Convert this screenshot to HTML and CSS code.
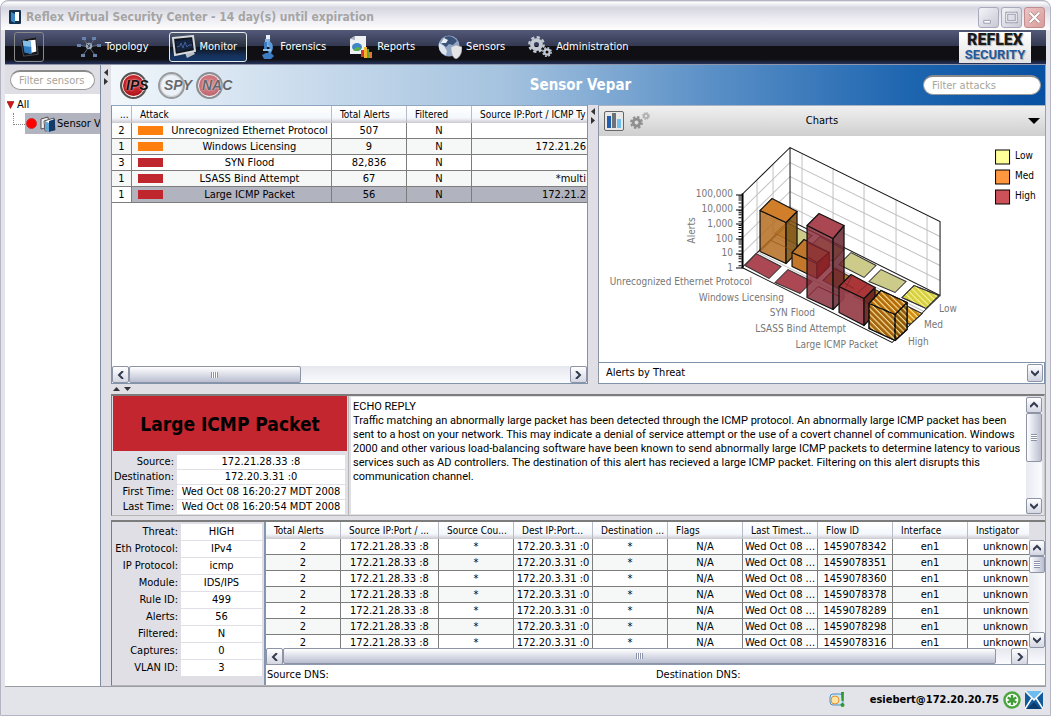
FILE: index.html
```html
<!DOCTYPE html>
<html lang="en">
<head>
<meta charset="utf-8">
<title>Reflex Virtual Security Center</title>
<link rel="stylesheet" href="styles.css">
</head>
<body>
<svg class="defs" width="0" height="0" aria-hidden="true">
  <defs>
    <symbol id="door" viewBox="0 0 24 24">
      <path d="M3 4 20 1 22 20 6 22Z" fill="#15171c" stroke="#4a4d55"/>
      <path d="M11 5 19 4 20 17 12 19Z" fill="#fff"/>
      <path d="M5 5 14 6 15 20 7 18Z" fill="#2f7cc0"/>
      <path d="M5 5 14 6 14 12 6 11Z" fill="#86bde6"/>
    </symbol>
    <symbol id="left" viewBox="0 0 8 8"><path d="M6 0 2 4 6 8" fill="none" stroke="#333b50" stroke-width="2"/></symbol>
    <symbol id="right" viewBox="0 0 8 8"><path d="M2 0 6 4 2 8" fill="none" stroke="#333b50" stroke-width="2"/></symbol>
    <symbol id="up" viewBox="0 0 8 8"><path d="M0 6 4 2 8 6" fill="none" stroke="#333b50" stroke-width="2"/></symbol>
    <symbol id="down" viewBox="0 0 8 8"><path d="M0 2 4 6 8 2" fill="none" stroke="#333b50" stroke-width="2"/></symbol>
    <symbol id="gear" viewBox="0 0 16 16">
      <circle cx="8" cy="8" r="6.8" fill="none" stroke="currentColor" stroke-width="2.2" stroke-dasharray="3 2.34"/>
      <circle cx="8" cy="8" r="4.2" fill="none" stroke="currentColor" stroke-width="3.6"/>
    </symbol>
  </defs>
</svg>
<div class="window">
  <header class="titlebar">
    <svg class="title-icon" viewBox="0 0 12 14"><rect width="12" height="14" rx="1" fill="#14304f"/><path d="M6 2h4v9H6z" fill="#fff"/><path d="M2 2l4 2v9l-4-2z" fill="#3b86c4"/></svg>
    <h1>Reflex Virtual Security Center - 14 day(s) until expiration</h1>
    <div class="win-buttons">
      <button class="win-btn" aria-label="Minimize"><svg viewBox="0 0 20 20"><path d="M5 13h7v3H5z" fill="#fff" stroke="#9a9aae"/></svg></button>
      <button class="win-btn" aria-label="Maximize"><svg viewBox="0 0 20 20"><path d="M5 5.500h10v9H5z" fill="none" stroke="#9a9aae" stroke-width="3"/><path d="M5 5.500h10v9H5z" fill="none" stroke="#fff"/></svg></button>
      <button class="win-btn close" aria-label="Close"><svg viewBox="0 0 20 20"><path d="M5 5l10 10M15 5 5 15" stroke="#b08080" stroke-width="4"/><path d="M5 5l10 10M15 5 5 15" stroke="#fff" stroke-width="2.400"/></svg></button>
    </div>
  </header>

  <nav class="nav">
    <button class="home" aria-label="Home"><svg viewBox="0 0 24 24"><use href="#door"/></svg></button>
    <button class="nav-item">
      <svg class="ico" viewBox="0 0 24 24"><path d="M12 12 6 3M12 12 18 3M12 12 2 10M12 12 22 10M12 12 6 20M12 12 18 20" stroke="#5f6b7c"/><g fill="#6883ad"><rect x="5" y="2" width="4" height="3"/><rect x="15" y="2" width="4" height="3"/><rect x="0" y="9" width="4" height="3"/><rect x="20" y="9" width="4" height="3"/><rect x="4" y="19" width="4" height="3"/><rect x="16" y="19" width="4" height="3"/></g><circle cx="12" cy="11" r="3.200" fill="#9aa7b8"/><path d="M10 9l3 3M13 9l-2 4" stroke="#3a485c"/></svg>
      Topology</button>
    <button class="nav-item active">
      <svg class="ico" viewBox="0 0 24 24"><path d="M13 18l8-2 2 3-8 4z" fill="#b9bec4"/><path d="M1 3 21 1 23 16 3 20Z" fill="#10151e" stroke="#d5d9dd" stroke-width="2"/><path d="M4 6 19 4 21 13 5 17Z" fill="#15243f"/><path d="M5 12l3-1 1-3 2 5 2-6 2 5 2-2 3 0" fill="none" stroke="#3f5f96"/></svg>
      Monitor</button>
    <button class="nav-item">
      <svg class="ico slim" viewBox="0 0 16 24"><path d="M6 0h4v4H6z" fill="#e8eef5"/><path d="M5 4h5v8H5z" fill="#7fb2e4"/><path d="M4 7h3v7H4z" fill="#3f79bd"/><path d="M9 6c5 2 5 9 1 13l-2-2c2-3 2-5 0-8z" fill="#5a9bdb"/><path d="M3 14h8v2H3z" fill="#8cc0ee"/><path d="M2 20l4-2h5l3 3-3 3H4z" fill="#3c7cc5"/></svg>
      Forensics</button>
    <button class="nav-item">
      <svg class="ico" viewBox="0 0 24 24"><path d="M1 4 6 1H17V19H1Z" fill="#eef0f2"/><path d="M1 4 6 1V5z" fill="#aab"/><ellipse cx="8" cy="12" rx="5" ry="4" fill="#3f86c8"/><path d="M8 12l-4 3c3 2 7 1 8-2z" fill="#57b148"/><path d="M12 15h3v7h-3z" fill="#d33b2b"/><path d="M15 12h3v11h-3z" fill="#f0b52c"/><path d="M18 14h2v9h-2z" fill="#6c9f3c"/><path d="M20 17h3v6h-3z" fill="#e27332"/></svg>
      Reports</button>
    <button class="nav-item">
      <svg class="ico" viewBox="0 0 24 24"><circle cx="11" cy="11" r="10.500" fill="#8fa5c6"/><path d="M7 2c4-2 9 0 12 4l-4 4-4-1-3 3-4-3z" fill="#3a5278"/><path d="M1 8l5 3 3 5-1 4C3 19 0 14 1 8z" fill="#dfe5ec"/><path d="M6 3l4 2-2 3-5 0z" fill="#e8edf3"/><path d="M13 12l5-2 6 2c0 6-2 10-6 12-4-2-5-6-5-12z" fill="#e3e4e6" stroke="#9a9ca0" stroke-width=".6"/></svg>
      Sensors</button>
    <button class="nav-item">
      <svg class="ico" viewBox="0 0 24 24" color="#c3c9d2"><use href="#gear" x="0" y="1" width="17" height="17"/><use href="#gear" x="14" y="12" width="10" height="10"/></svg>
      Administration</button>
    <div class="brand"><span class="brand-top">REFLEX</span><span class="brand-bottom">SECURITY</span></div>
  </nav>

  <div class="body">
    <aside class="side">
      <div class="side-filter"><input class="pill" type="text" placeholder="Filter sensors" aria-label="Filter sensors"></div>
      <ul class="tree">
        <li class="tree-root"><svg class="tri" viewBox="0 0 8 8"><path d="M0 0h8L4 8z" fill="#d81515" stroke="#7c0000" stroke-width=".6"/></svg>All</li>
        <li class="tree-child"><span class="elbow"></span><span class="tree-sel"><span class="dot"></span>
          <svg class="sensor-ico" viewBox="0 0 16 16"><path d="M1 3 8 1 9 11 1 13z" fill="#eee" stroke="#555"/><path d="M4 5 14 2 15 14 5 15z" fill="#fff" stroke="#555"/><path d="M9 5 15 3V14L9 16z" fill="#153a68"/><path d="M5 5l4 2v9l-4-2z" fill="#64a5da"/></svg>Sensor V</span></li>
      </ul>
    </aside>
    <div class="split-v"><svg class="arrows-v" viewBox="0 0 6 16"><path d="M5 0v7L1 3.500z"/><path d="M1 9v7l4-3.500z"/></svg></div>

    <main class="main">
      <div class="banner">
        <div class="modes">
          <button class="mode"><span class="orb red"></span><span class="mode-name">IPS</span></button>
          <button class="mode off"><span class="orb hollow"></span><span class="mode-name">SPY</span></button>
          <button class="mode off"><span class="orb red"></span><span class="mode-name">NAC</span></button>
        </div>
        <h2>Sensor Vepar</h2>
        <input class="pill" type="text" placeholder="Filter attacks" aria-label="Filter attacks">
      </div>

      <div class="upper">
        <section class="attacks">
          <table class="grid">
            <colgroup><col class="w-tiny"><col class="w-attack"><col class="w-75"><col class="w-65"><col></colgroup>
            <thead><tr><th>...</th><th>Attack</th><th>Total Alerts</th><th>Filtered</th><th>Source IP:Port / ICMP Ty</th></tr></thead>
            <tbody>
              <tr><td>2</td><td><div class="attack"><i class="sw med"></i><span>Unrecognized Ethernet Protocol</span></div></td><td>507</td><td>N</td><td></td></tr>
              <tr><td>1</td><td><div class="attack"><i class="sw med"></i><span>Windows Licensing</span></div></td><td>9</td><td>N</td><td class="end">172.21.26</td></tr>
              <tr><td>3</td><td><div class="attack"><i class="sw high"></i><span>SYN Flood</span></div></td><td>82,836</td><td>N</td><td></td></tr>
              <tr><td>1</td><td><div class="attack"><i class="sw high"></i><span>LSASS Bind Attempt</span></div></td><td>67</td><td>N</td><td class="end">*multi</td></tr>
              <tr class="selected"><td>1</td><td><div class="attack"><i class="sw high"></i><span>Large ICMP Packet</span></div></td><td>56</td><td>N</td><td class="end">172.21.2</td></tr>
            </tbody>
          </table>
          <div class="hscroll push">
            <button class="sbtn" aria-label="Scroll left"><svg><use href="#left"/></svg></button>
            <div class="track"><div class="thumb short"><i class="grip"></i></div></div>
            <button class="sbtn" aria-label="Scroll right"><svg><use href="#right"/></svg></button>
          </div>
        </section>
        <div class="split-v slim"><svg class="arrows-v" viewBox="0 0 6 16"><path d="M5 0v7L1 3.500z"/><path d="M1 9v7l4-3.500z"/></svg></div>
        <section class="charts">
          <div class="charts-head">
            <div class="tools">
              <button class="chart-btn" aria-label="Bar chart"><svg viewBox="0 0 16 16"><path d="M1 3h4v12H1z" fill="#1f5fae"/><path d="M6 0h4v15H6z" fill="#6d7278"/><path d="M11 6h4v9h-4z" fill="#6fc0ee"/></svg></button>
              <button class="gear-btn" aria-label="Chart settings"><svg viewBox="0 0 20 18" color="#8f8f8f"><use href="#gear" x="0" y="4" width="13" height="13"/><g color="#b0b0b0"><use href="#gear" x="12" y="0" width="8" height="8"/></g></svg></button>
            </div>
            <h3>Charts</h3>
            <button class="drop" aria-label="Chart menu"><svg viewBox="0 0 12 6"><path d="M0 0h12L6 6z"/></svg></button>
          </div>
          <svg class="chart" viewBox="599 136 446 225" role="img" aria-label="Alerts by threat">
            <defs>
              <pattern id="hatch" width="4" height="4" patternUnits="userSpaceOnUse" patternTransform="rotate(-45)"><path d="M1 0v4" stroke="#fff3b0" stroke-width="1"/></pattern>
            </defs>
            <g fill="none" stroke="#c2c2c2">
              <path d="M742 209 790 162 940 236M742 223 790 176 940 250M742 238 790 191 940 265M742 253 790 206 940 280"/>
              <path d="M757 180V252M773 164V236M802 153V226M833 168V241M864 184V257M896 199V272M927 215V288"/>
              <path d="M758 252 908 327M774 236 924 311"/>
            </g>
            <path d="M742 194 790 147 940 221V295L790 220V147M742 267 790 220M742 267 892 342 940 295" fill="none" stroke="#111"/>
            <g stroke="#333" stroke-width="1">
              <g fill="#cccb8a">
                <path d="M775 233 787 222 812 235 800 246z"/><path d="M808 248 820 236 844 249 833 261z"/>
                <path d="M839 264 851 252 876 265 864 277z"/><path d="M869 281 881 269 906 281 895 292z"/>
              </g>
              <path d="M902 297 914 285 939 295 926 308z" fill="#d4d13c"/><path d="M902 297 914 285 939 295 926 308z" fill="url(#hatch)"/>
              <g fill="#b87822"><path d="M823 280 835 268 859 281 848 293z"/><path d="M854 296 866 284 890 297 879 309z"/></g>
              <path d="M886 313 898 301 922 313 910 324z" fill="#d08c10"/><path d="M886 313 898 301 922 313 910 324z" fill="url(#hatch)"/>
              <g fill="#ab4853"><path d="M745 265 756 253 781 266 769 278z"/><path d="M775 282 788 269 812 281 800 293z"/></g>
            </g>
            <g stroke="#111" stroke-width="1.200" stroke-linejoin="round">
              <path d="M760 210 786 222V263L760 251z" fill="#b56c1e" fill-opacity=".85"/><path d="M786 222 797 211V252L786 263z" fill="#80500f" fill-opacity=".88"/><path d="M760 210 772 198 797 211 786 222z" fill="#d07e2a"/>
              <path d="M760 251 771 240 797 252" fill="none" stroke="#8a5315" stroke-width=".7"/><path d="M771 240 786 225" fill="none" stroke="#8a5315" stroke-width=".7"/>
              <path d="M792 252 817 263V278L792 266z" fill="#c4762a"/><path d="M817 263 829 252V266L817 278z" fill="#94591a"/><path d="M792 252 804 239 829 252 817 263z" fill="#bf762b"/>
              <path d="M807 225 833 238V309L807 297z" fill="#852b38" fill-opacity=".83"/><path d="M833 238 844 225V298L833 309z" fill="#6a2630" fill-opacity=".86"/><path d="M807 225 819 213 844 225 833 238z" fill="#aa4752"/>
              <path d="M807 256 817 262 829 252M817 263V277L829 266V252L807 242M823 280 835 268 844 273M807 297 818 286 844 298" fill="none" stroke="#6b1822" stroke-width=".8"/>
              <path d="M817 263 829 252V266L817 278z" fill="#8d1d21" stroke="none" fill-opacity=".65"/>
              <path d="M839 286 864 298V325L839 312z" fill="#97404a" fill-opacity=".94"/><path d="M864 298 875 287V313L864 325z" fill="#6d2420" fill-opacity=".94"/><path d="M839 286 851 274 875 287 864 298z" fill="#aa3638"/>
              <path d="M857 293 867 284M843 282 854 288M852 275 846 287" fill="none" stroke="#74202a" stroke-width=".7"/>
              <path d="M869 303 895 314V340L869 328z" fill="#a4630c"/><path d="M895 314 907 302V329L895 340z" fill="#8f5806"/><path d="M869 303 881 290 907 302 895 314z" fill="#b56a06"/>
              <path d="M869 303 881 290 907 302V329L895 340 869 328z" fill="url(#hatch)"/><path d="M869 303 895 314 907 302M895 314V340" fill="none"/>
            </g>
            <path d="M742.500 193V268" stroke="#000" stroke-width="2"/>
            <path d="M736 194.500h6M736 209.500h6M736 223.500h6M736 238.500h6M736 253.500h6M736 267.500h6" stroke="#000"/>
            <path d="M740 195V267" stroke="#000" stroke-width="3" stroke-dasharray="1 1 1 1 1 2 1 3 1 2.700"/>
            <g class="axis end-anchor">
              <text x="733" y="197">100,000</text><text x="733" y="212">10,000</text><text x="733" y="227">1,000</text><text x="733" y="242">100</text><text x="733" y="256">10</text><text x="733" y="271">1</text>
              <text x="752" y="285">Unrecognized Ethernet Protocol</text><text x="784" y="301">Windows Licensing</text><text x="815" y="316">SYN Flood</text><text x="846" y="332">LSASS Bind Attempt</text><text x="878" y="347">Large ICMP Packet</text>
            </g>
            <g class="axis"><text x="939" y="312">Low</text><text x="924" y="328">Med</text><text x="908" y="344">High</text><text transform="rotate(-90 695 243)" x="695" y="243">Alerts</text></g>
            <g stroke="#000"><path d="M995.500 149.500h14v14h-14z" fill="#ff9"/><path d="M995.500 169.500h14v14h-14z" fill="#ff9640"/><path d="M995.500 189.500h14v14h-14z" fill="#cc5158"/></g>
            <g class="legend"><text x="1015" y="159">Low</text><text x="1015" y="179">Med</text><text x="1015" y="199">High</text></g>
          </svg>
          <div class="pick"><select aria-label="Chart type"><option>Alerts by Threat</option></select><span class="pick-arrow"><svg><use href="#down"/></svg></span></div>
        </section>
      </div>

      <div class="split-h"><svg class="arrows-h" viewBox="0 0 20 6"><path d="M1 5h7L4.500 1z"/><path d="M12 1h7l-3.500 4z"/></svg></div>

      <section class="detail">
        <div class="summary">
          <div class="threat">Large ICMP Packet</div>
          <table class="props wide">
            <tr><th scope="row">Source:</th><td>172.21.28.33 :8</td></tr>
            <tr><th scope="row">Destination:</th><td>172.20.3.31 :0</td></tr>
            <tr><th scope="row">First Time:</th><td>Wed Oct 08 16:20:27 MDT 2008</td></tr>
            <tr><th scope="row">Last Time:</th><td>Wed Oct 08 16:20:54 MDT 2008</td></tr>
          </table>
        </div>
        <div class="note">
          <div class="note-text">ECHO REPLY<br>Traffic matching an abnormally large packet has been detected through the ICMP protocol. An abnormally large ICMP packet has been sent to a host on your network. This may indicate a denial of service attempt or the use of a covert channel of communication. Windows 2000 and other various load-balancing software have been known to send abnormally large ICMP packets to determine latency to various services such as AD controllers. The destination of this alert has recieved a large ICMP packet. Filtering on this alert disrupts this communication channel.</div>
          <div class="vscroll">
            <button class="sbtn" aria-label="Scroll up"><svg><use href="#up"/></svg></button>
            <div class="track"><div class="thumb tall"><i class="grip"></i></div></div>
            <button class="sbtn" aria-label="Scroll down"><svg><use href="#down"/></svg></button>
          </div>
        </div>
      </section>

      <section class="lower">
        <table class="props narrow">
          <tr><th scope="row">Threat:</th><td>HIGH</td></tr>
          <tr><th scope="row">Eth Protocol:</th><td>IPv4</td></tr>
          <tr><th scope="row">IP Protocol:</th><td>icmp</td></tr>
          <tr><th scope="row">Module:</th><td>IDS/IPS</td></tr>
          <tr><th scope="row">Rule ID:</th><td>499</td></tr>
          <tr><th scope="row">Alerts:</th><td>56</td></tr>
          <tr><th scope="row">Filtered:</th><td>N</td></tr>
          <tr><th scope="row">Captures:</th><td>0</td></tr>
          <tr><th scope="row">VLAN ID:</th><td>3</td></tr>
        </table>
        <div class="flows">
          <div class="flows-view">
            <div class="flows-clip">
              <table class="grid">
                <colgroup><col class="w-75"><col class="w-98"><col class="w-75"><col class="w-79"><col class="w-75"><col class="w-75"><col class="w-75"><col class="w-75"><col class="w-75"><col></colgroup>
                <thead><tr><th>Total Alerts</th><th>Source IP:Port / ...</th><th>Source Cou...</th><th>Dest IP:Port...</th><th>Destination ...</th><th>Flags</th><th>Last Timest...</th><th>Flow ID</th><th>Interface</th><th>Instigator</th></tr></thead>
                <tbody>
                  <tr><td>2</td><td>172.21.28.33 :8</td><td>*</td><td>172.20.3.31 :0</td><td>*</td><td>N/A</td><td>Wed Oct 08 ...</td><td>1459078342</td><td>en1</td><td class="end">unknown</td></tr>
                  <tr><td>2</td><td>172.21.28.33 :8</td><td>*</td><td>172.20.3.31 :0</td><td>*</td><td>N/A</td><td>Wed Oct 08 ...</td><td>1459078351</td><td>en1</td><td class="end">unknown</td></tr>
                  <tr><td>2</td><td>172.21.28.33 :8</td><td>*</td><td>172.20.3.31 :0</td><td>*</td><td>N/A</td><td>Wed Oct 08 ...</td><td>1459078360</td><td>en1</td><td class="end">unknown</td></tr>
                  <tr><td>2</td><td>172.21.28.33 :8</td><td>*</td><td>172.20.3.31 :0</td><td>*</td><td>N/A</td><td>Wed Oct 08 ...</td><td>1459078378</td><td>en1</td><td class="end">unknown</td></tr>
                  <tr><td>2</td><td>172.21.28.33 :8</td><td>*</td><td>172.20.3.31 :0</td><td>*</td><td>N/A</td><td>Wed Oct 08 ...</td><td>1459078289</td><td>en1</td><td class="end">unknown</td></tr>
                  <tr><td>2</td><td>172.21.28.33 :8</td><td>*</td><td>172.20.3.31 :0</td><td>*</td><td>N/A</td><td>Wed Oct 08 ...</td><td>1459078298</td><td>en1</td><td class="end">unknown</td></tr>
                  <tr><td>2</td><td>172.21.28.33 :8</td><td>*</td><td>172.20.3.31 :0</td><td>*</td><td>N/A</td><td>Wed Oct 08 ...</td><td>1459078316</td><td>en1</td><td class="end">unknown</td></tr>
                </tbody>
              </table>
            </div>
            <div class="vscroll under-head">
              <button class="sbtn" aria-label="Scroll up"><svg><use href="#up"/></svg></button>
              <div class="track"><div class="thumb stub"><i class="grip"></i></div></div>
              <button class="sbtn" aria-label="Scroll down"><svg><use href="#down"/></svg></button>
            </div>
          </div>
          <div class="hscroll inset">
            <button class="sbtn" aria-label="Scroll left"><svg><use href="#left"/></svg></button>
            <div class="track"><div class="thumb long"><i class="grip"></i></div></div>
            <button class="sbtn" aria-label="Scroll right"><svg><use href="#right"/></svg></button>
          </div>
          <div class="dns"><span>Source DNS:</span><span>Destination DNS:</span></div>
        </div>
      </section>
    </main>
  </div>

  <footer class="status">
    <svg class="st-ico alert" viewBox="0 0 18 18"><rect x="2" y="3" width="13" height="11" rx="3" fill="#cfe6f5" stroke="#4a8fc0"/><circle cx="7" cy="9" r="4" fill="#ffe3a0" stroke="#e0912a"/><path d="M13 1h3l-.5 9h-2z" fill="#2c9a2c"/><circle cx="14.500" cy="14" r="2" fill="#2c9a2c"/></svg>
    <span class="user">esiebert@172.20.20.75</span>
    <svg class="st-ico" viewBox="0 0 18 18"><circle cx="9" cy="9" r="7.500" fill="#fff" stroke="#4aa63c" stroke-width="2.400"/><path d="M9 4v10M4.700 6.500l8.600 5M13.300 6.500l-8.600 5" stroke="#3f9b33" stroke-width="2.400"/></svg>
    <svg class="st-ico" viewBox="0 0 18 18"><path d="M0 0h18v18H0z" fill="#125a9a"/><path d="M0 0h18L9 9z" fill="#6cbcf0"/><path d="M0 0l9 9 9-9M0 18l7-11M18 18 11 7" fill="none" stroke="#fff" stroke-width="1.500"/><path d="M2 18 9 11l7 7z" fill="#0a3b6e"/></svg>
  </footer>
</div>
</body>
</html>
```
FILE: styles.css
```css
* { box-sizing: border-box; }
body {
  margin: 0;
  background: #fff;
  color: #000;
  font: 11px/14px "DejaVu Sans Condensed", "DejaVu Sans", sans-serif;
}
h1, h2, h3, ul { margin: 0; padding: 0; font-weight: normal; font-size: 11px; list-style: none; }
button, input, select { font: inherit; color: inherit; margin: 0; padding: 0; border: 0; background: none; }
svg { display: block; }
.defs { position: absolute; }

.window {
  min-height: 100vh;
  display: flex;
  flex-direction: column;
  padding: 1px 4px 3px;
  border: 1px solid #b4b4c2;
  border-radius: 8px 8px 0 0;
  background: #e3e3ea;
}

/* Title bar */
.titlebar {
  height: 28px;
  flex: none;
  display: flex;
  align-items: center;
  gap: 5px;
  margin: 0 -4px;
  padding: 2px 5px 0 8px;
  border-radius: 7px 7px 0 0;
  background: linear-gradient(#fff, #d6d6e0 20%, #ececf2 60%, #fff);
}
.title-icon { width: 12px; height: 14px; }
.titlebar h1 { flex: 1; font-size: 12px; font-weight: bold; color: #a5a5a5; }
.win-buttons { display: flex; gap: 2px; }
.win-btn { width: 21px; height: 21px; border: 1px solid #a9a9bb; border-radius: 3px; background: linear-gradient(135deg, #f3f3f8, #c9c9d6); }
.win-btn.close { background: linear-gradient(135deg, #ecc4c4, #d99c9c); border-color: #c08c90; }

/* Navigation */
.nav {
  height: 35px;
  flex: none;
  display: flex;
  align-items: center;
  gap: 10px;
  padding: 0 15px 0 9px;
  background: linear-gradient(#525878, #343a52 46%, #101014 48%, #101014 86%, #27335c);
  border-bottom: 1px solid #8f95ab;
  color: #fff;
}
.home { width: 30px; height: 30px; margin-right: 20px; padding: 3px; border: 1px solid #8a8a8a; border-radius: 3px; }
.home svg { width: 22px; height: 22px; }
.nav-item { height: 30px; display: flex; align-items: center; gap: 4px; padding: 0 9px 0 2px; border: 1px solid transparent; border-radius: 3px; }
.nav-item.active { border-color: #e4e9ea; background: linear-gradient(#4d566c, #252d3c 50%, #101318 52%, #15305a 80%, #15396a); }
.ico { width: 24px; height: 24px; }
.ico.slim { width: 16px; }
.brand {
  width: 72px; height: 31px; margin-left: auto;
  display: flex; flex-direction: column; align-items: center; justify-content: center;
  background: linear-gradient(#fff, #e2e2e4);
  font-family: Roboto, sans-serif; font-weight: 900; text-shadow: 1px 1px 1px #aaa;
}
.brand-top { font-size: 16px; line-height: 16px; color: #1b1b1b; }
.brand-bottom { font-size: 13px; line-height: 14px; font-weight: 700; color: #23599c; }

/* Body */
.body { flex: 1; display: flex; border-right: 1px solid #9aa0b4; border-bottom: 1px solid #9a9aa2; }
.side { width: 96px; flex: none; display: flex; flex-direction: column; border-right: 1px solid #7f8ba0; background: #fff; }
.side-filter { height: 29px; padding: 5px 5px 0; background: #dedee4; }
.pill { display: block; width: 100%; height: 20px; padding: 0 8px; border: 1px solid #9a9a9a; border-top: 2px solid #8a8a8a; border-radius: 10px; background: #fff; }
.pill::placeholder { color: #a7a59b; opacity: 1; }
.tree { padding: 3px 0 0 2px; }
.tree-root { display: flex; align-items: center; gap: 3px; height: 16px; }
.tri { width: 7px; height: 8px; }
.tree-child { display: flex; height: 21px; padding-left: 6px; overflow: hidden; }
.elbow { width: 12px; height: 12px; border-left: 1px dotted #888; border-bottom: 1px dotted #888; flex: none; }
.tree-sel { flex: 1; display: flex; align-items: center; gap: 1px; padding-left: 1px; white-space: nowrap; background: #b1b3bf; overflow: hidden; }
.dot { width: 11px; height: 11px; flex: none; border-radius: 50%; background: #f00; border: 1px solid #c33; }
.sensor-ico { width: 16px; height: 16px; flex: none; margin-left: 2px; }

.split-v { width: 10px; flex: none; padding: 3px 2px; background: #dfdfe5; }
.split-v.slim { padding: 2px; }
.arrows-v { width: 6px; height: 18px; fill: #333; }
.split-h { height: 10px; flex: none; padding: 2px 1px; }
.arrows-h { width: 20px; height: 6px; fill: #333; }

.main { flex: 1; min-width: 0; display: flex; flex-direction: column; background: #dfdfe5; }
.banner {
  height: 40px; flex: none;
  display: grid; grid-template-columns: 1fr auto 1fr; align-items: center;
  padding: 0 4px 0 9px;
  background: linear-gradient(90deg, #f2f7fb, #d4e2f0 15%, #a5c3df 42%, #5b90c7 64%, #1f66b0 85%, #0750a2);
}
.banner h2 { font: bold 15px/20px "DejaVu Sans Condensed", "DejaVu Sans", sans-serif; color: #fff; }
.banner .pill { width: 118px; justify-self: end; }
.modes { display: flex; gap: 8px; }
.mode { position: relative; width: 30px; height: 28px; }
.mode.off { opacity: .6; }
.orb { display: block; width: 27px; height: 27px; border-radius: 50%; }
.orb.red { border: 2px solid #555; background: radial-gradient(circle at 50% 40%, #e04040, #b81820 60%, #681015); box-shadow: inset 0 0 0 1px #eee; }
.orb.hollow { border: 2px solid #666; background: #f1f5f9; box-shadow: inset 0 0 0 1px #bbb; }
.mode-name { position: absolute; left: 6px; top: 7px; font: italic bold 14px/14px "Liberation Sans", sans-serif; color: #111; text-shadow: 0 0 2px #fff; }

/* Upper pane */
.upper { flex: 1; display: flex; min-height: 278px; }
.attacks { flex: 477 1 0; min-width: 0; display: flex; flex-direction: column; border: 1px solid #7f93ab; border-top-color: #8fa6c0; background: #fff; }
.push { margin-top: auto; }
.grid { width: 100%; table-layout: fixed; border-collapse: separate; border-spacing: 0; }
.grid th, .grid td { height: 16px; padding: 0; line-height: 15px; white-space: nowrap; overflow: hidden; }
.grid th {
  height: 17px; padding-left: 8px; text-align: left;
  font-size: 10px; font-weight: normal; line-height: 14px;
  background: linear-gradient(#fff, #f4f8fc 70%, #e8e8ee 80%, #c9c9d0);
}
.grid th:not(:last-child) { border-right: 1px solid #b9bcc6; }
.grid td { text-align: center; border-right: 1px solid #7d7d7d; border-bottom: 1px solid #7d7d7d; background: #fff; }
.grid td:last-child { border-right: 0; }
.grid tr:nth-child(even) td { background: #f6f8f7; }
.grid tr.selected td:not(:first-child) { background: #b1b3bf; }
.grid td.end { text-align: right; padding-right: 1px; }
.w-tiny { width: 20px; }
.w-attack { width: 200px; }
.w-65 { width: 65px; }
.w-75 { width: 75px; }
.w-79 { width: 79px; }
.w-98 { width: 98px; }
.attack { display: flex; align-items: center; gap: 5px; padding-left: 6px; }
.attack span { flex: 1; }
.sw { width: 25px; height: 9px; flex: none; }
.sw.med { background: #ff7f0e; }
.sw.high { background: #c0262d; }

/* Scrollbars */
.hscroll { display: flex; height: 17px; flex: none; background: linear-gradient(#e6e8ef, #fafbfe); }
.vscroll { display: flex; flex-direction: column; width: 16px; flex: none; background: linear-gradient(90deg, #e9eaf0, #fafbfe); }
.sbtn { width: 17px; height: 17px; flex: none; display: flex; align-items: center; justify-content: center; border: 1px solid #8d94a6; border-radius: 2px; background: linear-gradient(#fff, #d4d6e2); }
.vscroll .sbtn { width: 16px; height: 16px; }
.sbtn svg, .pick-arrow svg { width: 8px; height: 8px; }
.track { flex: 1; display: flex; min-width: 0; min-height: 0; }
.vscroll .track { flex-direction: column; }
.thumb { display: flex; align-items: center; justify-content: center; border: 1px solid #8d94a6; border-radius: 2px; background: linear-gradient(#fff, #dfe1ea 45%, #b9bed0); }
.vscroll .thumb { background: linear-gradient(90deg, #fff, #dfe1ea 45%, #b9bed0); }
.grip { width: 7px; height: 6px; background: repeating-linear-gradient(90deg, #8b93a8 0 1px, #fff 1px 2px); }
.vscroll .grip { height: 7px; width: 6px; background: repeating-linear-gradient(#8b93a8 0 1px, #fff 1px 2px); }
.short { width: 39%; }
.long { width: 98%; }
.tall { height: 58%; }
.stub { height: 17px; }

/* Charts */
.charts { flex: 448 1 0; min-width: 0; display: flex; flex-direction: column; border-left: 1px solid #8a94a4; border-top: 1px solid #a8b4c4; background: #fff; }
.charts-head { height: 30px; flex: none; display: grid; grid-template-columns: 1fr auto 1fr; align-items: center; padding: 0 5px; background: linear-gradient(#f0f0f0, #cfcfcf); }
.tools { display: flex; align-items: center; gap: 6px; }
.chart-btn { width: 20px; height: 20px; padding: 1px; border: 1px solid #666; border-radius: 2px; background: #e8e8e8; }
.chart-btn svg { width: 16px; height: 16px; }
.gear-btn svg { width: 20px; height: 18px; }
.drop { justify-self: end; }
.drop svg { width: 12px; height: 6px; }
.chart { flex: 1; width: 100%; min-height: 0; }
.axis { font-size: 10px; fill: #777; }
.end-anchor { text-anchor: end; }
.legend { font-size: 10px; }
.pick { position: relative; height: 22px; flex: none; border: 1px solid #7f93ab; border-width: 1px 1px 1px 0; }
.pick select { width: 100%; height: 20px; padding-left: 7px; appearance: none; }
.pick-arrow { position: absolute; right: 1px; top: 1px; width: 16px; height: 18px; display: flex; align-items: center; justify-content: center; border: 1px solid #8d94a6; border-radius: 2px; background: linear-gradient(#fff, #cfd2df); pointer-events: none; }

/* Detail */
.detail { flex: none; display: flex; min-height: 122px; margin-bottom: 4px; border: 1px solid #7c7c7c; border-width: 2px 1px 1px; border-bottom-color: #b5b5b5; border-right-color: #c8c8cc; }
.summary { width: 237px; flex: none; display: flex; flex-direction: column; padding: 0 1px; border-right: 1px solid #b5b5b5; }
.threat { flex: 1; display: flex; align-items: center; justify-content: center; background: #c3262e; font-size: 19px; line-height: 24px; font-weight: bold; }
.props { border-collapse: separate; border-spacing: 0 1px; table-layout: fixed; }
.props th, .props td { padding: 0; font-weight: normal; white-space: nowrap; }
.props th { text-align: right; padding-right: 3px; }
.props td { text-align: center; background: #fff; }
.props.wide { width: 100%; margin-top: 3px; padding-right: 2px; }
.props.wide th { width: 64px; }
.props.wide td { height: 14px; line-height: 14px; }
.note { flex: 1; min-width: 0; display: flex; margin: 1px 2px; background: #fff; }
.note-text { flex: 1; padding: 3px 2px; font: 11px/14px Roboto, sans-serif; }

/* Flows */
.lower { flex: none; display: flex; border: 1px solid #7c7c7c; border-width: 2px 0 1px 1px; border-bottom-color: #b5b5b5; }
.props.narrow { width: 150px; flex: none; margin: 1px 2px 8px 0; }
.props.narrow th { width: 69px; }
.props.narrow td { height: 16px; line-height: 16px; }
.flows { flex: 1; min-width: 0; display: flex; flex-direction: column; border-left: 2px solid #8296b0; background: #fff; }
.flows-view { display: flex; height: 126px; background: #dfdfe5; }
.flows-clip { flex: 1; min-width: 0; overflow: hidden; }
.under-head { margin-top: 18px; }
.inset { padding-right: 17px; border-bottom: 1px solid #8d9ab0; }
.dns { flex: 1; display: grid; grid-template-columns: 1fr 1fr; align-items: center; padding-left: 1px; }

/* Status bar */
.status { height: 25px; flex: none; display: flex; align-items: center; justify-content: flex-end; gap: 4px; padding-right: 3px; }
.st-ico { width: 18px; height: 18px; }
.alert { margin-right: 20px; }
.user { font-weight: bold; }
```
